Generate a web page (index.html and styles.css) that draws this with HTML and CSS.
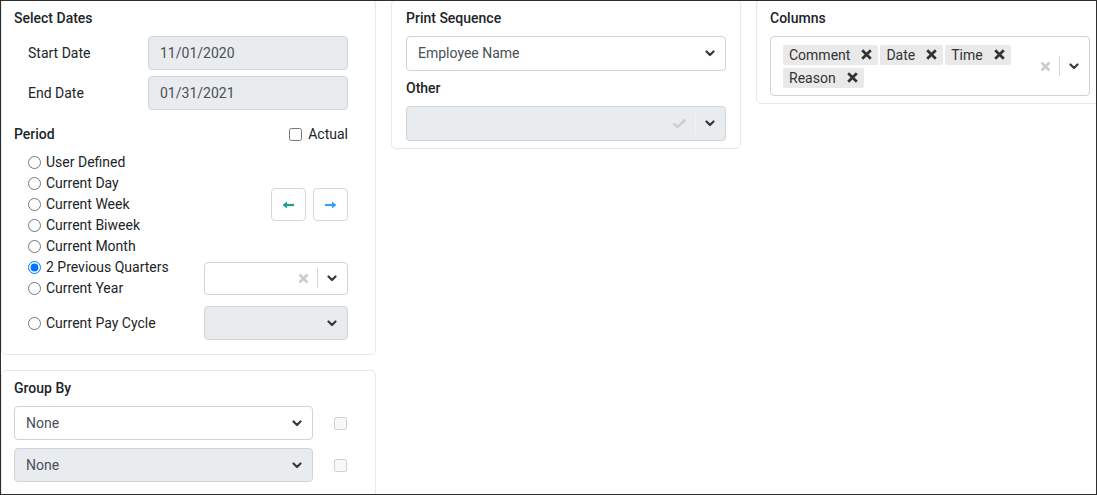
FILE: index.html
```html
<!DOCTYPE html>
<html lang="en">
<head>
<meta charset="utf-8">
<title>Report Options</title>
<link rel="stylesheet" href="styles.css">
</head>
<body>
<div class="page">
  <div class="board">
    <div class="col">
      <section class="card card-dates">
        <h3 class="title">Select Dates</h3>
        <div class="field-row">
          <span class="field-label">Start Date</span>
          <div class="input is-disabled">11/01/2020</div>
        </div>
        <div class="field-row field-row-2">
          <span class="field-label">End Date</span>
          <div class="input is-disabled">01/31/2021</div>
        </div>
        <div class="period-head">
          <span class="title">Period</span>
          <label class="check"><input type="checkbox">Actual</label>
        </div>
        <div class="period-grid">
          <label class="radio"><input type="radio" name="period">User Defined</label>
          <label class="radio"><input type="radio" name="period">Current Day</label>
          <label class="radio"><input type="radio" name="period">Current Week</label>
          <label class="radio"><input type="radio" name="period">Current Biweek</label>
          <label class="radio"><input type="radio" name="period">Current Month</label>
          <label class="radio"><input type="radio" name="period" checked>2 Previous Quarters</label>
          <label class="radio"><input type="radio" name="period">Current Year</label>
          <div class="arrows">
            <button class="arrow-btn" type="button" aria-label="Previous">
              <svg width="13" height="8" viewBox="0 0 13 8"><path d="M4 4h8" stroke="#17a38c" stroke-width="2.2"/><path d="M0.5 4 5 0.6v6.8z" fill="#17a38c"/></svg>
            </button>
            <button class="arrow-btn" type="button" aria-label="Next">
              <svg width="13" height="8" viewBox="0 0 13 8"><path d="M1 4h8" stroke="#3a9ff2" stroke-width="2.2"/><path d="M12.5 4 8 0.6v6.8z" fill="#3a9ff2"/></svg>
            </button>
          </div>
          <div class="select select-quarter">
            <span class="value"></span>
            <svg class="clear" width="11" height="11" viewBox="0 0 11 11"><path d="M1.5 1.5l8 8M9.5 1.5l-8 8" stroke="#cccccc" stroke-width="2.6"/></svg>
            <span class="sep"></span>
            <svg class="chev" width="10" height="7" viewBox="0 0 10 7"><path d="M1.5 1.5 5 5l3.5-3.5" fill="none" stroke="#343a40" stroke-width="2.2" stroke-linecap="round" stroke-linejoin="round"/></svg>
          </div>
        </div>
        <div class="pay-row">
          <label class="radio"><input type="radio" name="period">Current Pay Cycle</label>
          <div class="select select-pay is-disabled">
            <span class="value"></span>
            <svg class="chev" width="10" height="7" viewBox="0 0 10 7"><path d="M1.5 1.5 5 5l3.5-3.5" fill="none" stroke="#343a40" stroke-width="2.2" stroke-linecap="round" stroke-linejoin="round"/></svg>
          </div>
        </div>
      </section>

      <section class="card card-group">
        <h3 class="title">Group By</h3>
        <div class="group-row">
          <div class="select select-group">
            <span class="value">None</span>
            <svg class="chev" width="10" height="7" viewBox="0 0 10 7"><path d="M1.5 1.5 5 5l3.5-3.5" fill="none" stroke="#343a40" stroke-width="2.2" stroke-linecap="round" stroke-linejoin="round"/></svg>
          </div>
          <input class="group-check" type="checkbox" disabled>
        </div>
        <div class="group-row group-row-2">
          <div class="select select-group is-disabled">
            <span class="value">None</span>
            <svg class="chev" width="10" height="7" viewBox="0 0 10 7"><path d="M1.5 1.5 5 5l3.5-3.5" fill="none" stroke="#343a40" stroke-width="2.2" stroke-linecap="round" stroke-linejoin="round"/></svg>
          </div>
          <input class="group-check" type="checkbox" disabled>
        </div>
      </section>
    </div>

    <section class="card card-print">
      <h3 class="title">Print Sequence</h3>
      <div class="select select-tall spaced">
        <span class="value">Employee Name</span>
        <svg class="chev" width="10" height="7" viewBox="0 0 10 7"><path d="M1.5 1.5 5 5l3.5-3.5" fill="none" stroke="#343a40" stroke-width="2.2" stroke-linecap="round" stroke-linejoin="round"/></svg>
      </div>
      <h3 class="title spaced">Other</h3>
      <div class="select select-tall spaced is-disabled">
        <span class="value"></span>
        <svg class="tick" width="15" height="11" viewBox="0 0 15 11"><path d="M1.5 5.5l4 3.6 8-7.6" fill="none" stroke="#cfcfcf" stroke-width="2.6"/></svg>
        <span class="sep sep-other"></span>
        <svg class="chev" width="10" height="7" viewBox="0 0 10 7"><path d="M1.5 1.5 5 5l3.5-3.5" fill="none" stroke="#343a40" stroke-width="2.2" stroke-linecap="round" stroke-linejoin="round"/></svg>
      </div>
    </section>

    <section class="card card-columns">
      <h3 class="title">Columns</h3>
      <div class="multi spaced">
        <div class="tags">
          <span class="tag"><span class="tag-text">Comment</span><svg class="tag-x" width="11" height="11" viewBox="0 0 11 11"><path d="M1.2 1.2l8.6 8.6M9.8 1.2l-8.6 8.6" stroke="#2f3338" stroke-width="2.7"/></svg></span>
          <span class="tag"><span class="tag-text">Date</span><svg class="tag-x" width="11" height="11" viewBox="0 0 11 11"><path d="M1.2 1.2l8.6 8.6M9.8 1.2l-8.6 8.6" stroke="#2f3338" stroke-width="2.7"/></svg></span>
          <span class="tag"><span class="tag-text">Time</span><svg class="tag-x" width="11" height="11" viewBox="0 0 11 11"><path d="M1.2 1.2l8.6 8.6M9.8 1.2l-8.6 8.6" stroke="#2f3338" stroke-width="2.7"/></svg></span>
          <span class="tag"><span class="tag-text">Reason</span><svg class="tag-x" width="11" height="11" viewBox="0 0 11 11"><path d="M1.2 1.2l8.6 8.6M9.8 1.2l-8.6 8.6" stroke="#2f3338" stroke-width="2.7"/></svg></span>
        </div>
        <div class="multi-ind">
          <svg class="clear" width="11" height="11" viewBox="0 0 11 11"><path d="M1.5 1.5l8 8M9.5 1.5l-8 8" stroke="#cccccc" stroke-width="2.6"/></svg>
          <span class="sep"></span>
          <svg class="chev" width="10" height="7" viewBox="0 0 10 7"><path d="M1.5 1.5 5 5l3.5-3.5" fill="none" stroke="#343a40" stroke-width="2.2" stroke-linecap="round" stroke-linejoin="round"/></svg>
        </div>
      </div>
    </section>
  </div>
</div>
</body>
</html>
```

FILE: styles.css
```css
html, body {
  margin: 0;
  padding: 0;
  background: #ffffff;
}

.page {
  width: 1097px;
  height: 495px;
  box-sizing: border-box;
  border: 1px solid #2e2e2e;
  overflow: hidden;
  font-family: Roboto, "Liberation Sans", Arial, sans-serif;
  font-size: 14px;
  line-height: 21px;
  color: #212529;
}

.board {
  margin-top: -2px;
  display: grid;
  grid-template-columns: 375px 350px 348px;
  column-gap: 15px;
  align-items: start;
}

.col {
  display: flex;
  flex-direction: column;
  gap: 15px;
}

.card {
  border: 1px solid #e7e7e7;
  border-radius: 5px;
  background: #fff;
  box-sizing: border-box;
}

.card-dates { padding: 8px 27px 14px 12px; }
.card-group { padding: 7px 27px 30px 12px; }
.card-print { padding: 8px 14px 7px 14px; }
.card-columns { padding: 8px 13px 7px 13px; }

.title {
  margin: 0;
  font-size: 14px;
  line-height: 21px;
  font-weight: 500;
  color: #212529;
}

.spaced { margin-top: 7px; }

/* date fields */
.field-row {
  display: flex;
  align-items: center;
  padding-left: 14px;
  margin-top: 7px;
}
.field-row-2 { margin-top: 6px; }
.field-label {
  width: 120px;
  color: #212529;
}
.input {
  width: 200px;
  height: 34px;
  box-sizing: border-box;
  border: 1px solid #ced4da;
  border-radius: 4px;
  padding: 0 11px;
  display: flex;
  align-items: center;
  color: #495057;
}
.is-disabled { background: #e9ecef; }

/* period */
.period-head {
  margin-top: 14px;
  display: flex;
  justify-content: space-between;
  align-items: center;
}
.check {
  display: flex;
  align-items: center;
  color: #212529;
}
.check input {
  width: 13px;
  height: 13px;
  margin: 0 6px 0 0;
}

.period-grid {
  margin-top: 7px;
  padding-left: 14px;
  display: grid;
  grid-template-columns: 1fr 144px;
  grid-auto-rows: 21px;
}
.period-grid .radio { grid-column: 1; }

.radio {
  display: flex;
  align-items: center;
  white-space: nowrap;
  color: #212529;
}
.radio input {
  width: 13px;
  height: 13px;
  margin: 0 5px 0 0;
}

.arrows {
  grid-column: 2;
  grid-row: 2 / 5;
  display: flex;
  justify-content: flex-end;
  align-items: center;
  gap: 7px;
}
.arrow-btn {
  width: 35px;
  height: 33px;
  box-sizing: border-box;
  border: 1px solid #d3d6da;
  border-radius: 4px;
  background: #fff;
  padding: 0;
  display: flex;
  align-items: center;
  justify-content: center;
}

/* selects */
.select {
  height: 34px;
  box-sizing: border-box;
  border: 1px solid #ced4da;
  border-radius: 4px;
  display: flex;
  align-items: center;
  padding: 0 10px 0 11px;
  color: #495057;
  background: #fff;
}
.select.is-disabled { background: #e9ecef; }
.select .value { flex: 1; }
.select-tall { height: 35px; }
.chev { display: block; flex: none; }
.clear { display: block; flex: none; }
.sep {
  width: 1px;
  height: 20px;
  background: #d6d6d6;
  margin: 0 9px 0 8px;
  flex: none;
}
.select.is-disabled .sep { background: #f3f3f3; }

.select-quarter {
  grid-column: 2;
  grid-row: 6 / 8;
  align-self: center;
  height: 33px;
}

.pay-row {
  margin-top: 7px;
  padding-left: 14px;
  display: flex;
  align-items: center;
  justify-content: space-between;
}
.select-pay { width: 144px; }

.tick { display: block; flex: none; }
.sep-other { margin-left: 8px; }

/* group by */
.group-row {
  margin-top: 7px;
  display: flex;
  align-items: center;
}
.group-row-2 { margin-top: 8px; }
.select-group { width: 299px; }
.group-check {
  width: 13px;
  height: 13px;
  margin: 0 0 0 21px;
}

/* columns multi select */
.multi {
  height: 60px;
  box-sizing: border-box;
  border: 1px solid #ced4da;
  border-radius: 4px;
  display: flex;
  align-items: center;
  padding: 0 10px 0 12px;
}
.tags {
  flex: 1;
  display: flex;
  flex-wrap: wrap;
  gap: 3px 2px;
  align-content: center;
}
.tag {
  height: 20px;
  display: inline-flex;
  align-items: center;
  background: #e9e9e9;
  border-radius: 2px;
  color: #333;
  line-height: 20px;
}
.tag-text { padding: 0 6px; }
.tag-x {
  display: block;
  margin: 0 6px 0 5px;
}
.multi-ind {
  margin-left: 5px;
  display: flex;
  align-items: center;
}
```
